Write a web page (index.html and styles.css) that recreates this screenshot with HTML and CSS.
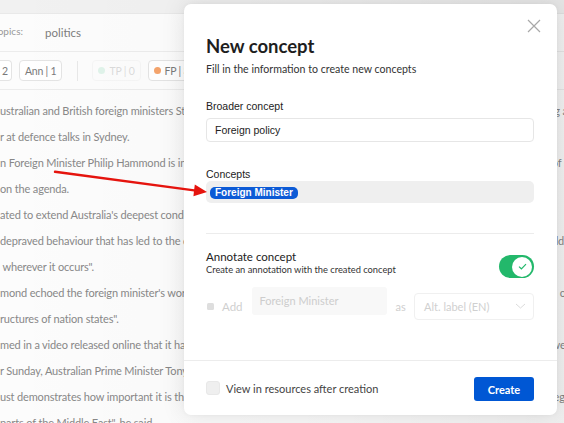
FILE: index.html
```html
<!DOCTYPE html>
<html lang="en">
<head>
<meta charset="utf-8">
<title>New concept</title>
<link rel="stylesheet" href="styles.css">
</head>
<body>
<div class="page">
  <div class="doc">
    <div class="doc-header"></div>
    <div class="topics"><span class="topics-label">Topics:</span><span class="topics-value">politics</span></div>
    <div class="chips">
      <span class="chip chip-cut">2</span>
      <span class="chip">Ann | 1</span>
      <span class="chip-divider"></span>
      <span class="chip chip-faded"><span class="dot dot-green"></span>TP | 0</span>
      <span class="chip"><span class="dot dot-orange"></span>FP | 3</span>
    </div>
    <div class="doc-text">
      <p>ustralian and British foreign ministers Stood side by side in Sydney on Sunday as they spoke out against the group during a joint</p>
      <p>r at defence talks in Sydney.</p>
      <p>n Foreign Minister Philip Hammond is in Australia for talks with Julie Bishop where security is at the very top of the list of issues to</p>
      <p>on the agenda.</p>
      <p>ated to extend Australia's deepest condolences to the families</p>
      <p>depraved behaviour that has led to the deaths of innocent people in Iraq and in Syria as well as in other parts of the world</p>
      <p>&nbsp;wherever it occurs".</p>
      <p>mond echoed the foreign minister's words, saying the group seeks to destroy the institutions of the governments and all of the ls</p>
      <p>ructures of nation states".</p>
      <p>med in a video released online that it had beheaded the aid worker, an act that was widely condemned by leaders who were</p>
      <p>r Sunday, Australian Prime Minister Tony Abbott said the murder was an outrage</p>
      <p>ust demonstrates how important it is that we stand together against the terror in those and the other countries of this region in</p>
      <p>parts of the Middle East", he said.</p>
    </div>
  </div>
  <div class="overlay"></div>
  <svg class="arrow" width="564" height="423" viewBox="0 0 564 423" aria-hidden="true">
    <line x1="55" y1="171.8" x2="196" y2="190.6" stroke="#e5140e" stroke-width="2.4" stroke-linecap="round"/>
    <polygon points="207,192 193.4,196.2 194.8,184.6" fill="#e5140e"/>
  </svg>
  <div class="modal">
    <button class="close" aria-label="Close">
      <svg width="14" height="14" viewBox="0 0 14 14"><path d="M1 1 L13 13 M13 1 L1 13" stroke="#a8a8a8" stroke-width="1.2" fill="none"/></svg>
    </button>
    <div class="modal-body">
      <h1 class="title">New concept</h1>
      <p class="subtitle">Fill in the information to create new concepts</p>

      <div class="field">
        <label class="field-label">Broader concept</label>
        <div class="input">Foreign policy</div>
      </div>

      <div class="field field-concepts">
        <label class="field-label">Concepts</label>
        <div class="concepts-box"><span class="tag">Foreign Minister</span></div>
      </div>

      <div class="separator"></div>

      <div class="annotate">
        <div class="annotate-text">
          <div class="annotate-title">Annotate concept</div>
          <div class="annotate-sub">Create an annotation with the created concept</div>
        </div>
        <div class="toggle"><span class="knob">
          <svg width="9" height="7" viewBox="0 0 9 7"><path d="M1 3.6 L3.4 5.8 L8 1.2" stroke="#23b86b" stroke-width="1.2" fill="none"/></svg>
        </span></div>
      </div>

      <div class="add-row">
        <span class="mini-check"></span>
        <span class="add-label">Add</span>
        <div class="add-input">Foreign Minister</div>
        <span class="as-label">as</span>
        <div class="select">
          <span>Alt. label (EN)</span>
          <svg width="11" height="6" viewBox="0 0 11 6"><path d="M1 1 L5.5 5 L10 1" stroke="#dcdcdc" stroke-width="1" fill="none"/></svg>
        </div>
      </div>
    </div>
    <div class="modal-footer">
      <label class="view-check"><span class="checkbox"></span><span class="view-label">View in resources after creation</span></label>
      <button class="create">Create</button>
    </div>
  </div>
</div>
</body>
</html>
```

FILE: styles.css
```css
* { box-sizing: border-box; }
html, body { margin: 0; padding: 0; }
body {
  width: 564px;
  height: 423px;
  overflow: hidden;
  background: #fcfcfc;
  font-family: "Lato", "Liberation Sans", sans-serif;
}
.page {
  position: relative;
  width: 564px;
  height: 423px;
  overflow: hidden;
}
.doc { width: 564px; }
.doc-header {
  height: 14px;
  background: #f1f1f1;
  border-bottom: 1px solid #e9e9e9;
}
.topics {
  height: 38px;
  display: flex;
  align-items: center;
  border-bottom: 1px solid #ececec;
  margin-left: -7px;
  color: #999;
}
.topics-label { font-size: 10px; margin-top: -4px; }
.topics-value { font-size: 11.5px; margin-left: 22px; color: #7d7d7d; }
.chips {
  height: 38px;
  display: flex;
  align-items: center;
  border-bottom: 1px solid #ececec;
  gap: 7px;
}
.chip {
  height: 21px;
  display: inline-flex;
  align-items: center;
  gap: 4px;
  padding: 0 5px;
  border: 1px solid #e4e4e4;
  border-radius: 4px;
  background: #fff;
  font-size: 10.5px;
  letter-spacing: -0.2px;
  color: #7a7a7a;
}
.chip-cut { border-left: none; border-radius: 0 4px 4px 0; padding: 0 3px 0 2px; }
.chip-divider { width: 1px; height: 20px; background: #e8e8e8; margin: 0 7px 0 8px; }
.chip-faded { opacity: 0.25; }
.dot { width: 7px; height: 7px; border-radius: 50%; display: inline-block; }
.dot-green { background: #8fdcb6; }
.dot-orange { background: #f5a46c; }
.doc-text { padding-top: 8px; }
.doc-text p {
  margin: 0;
  height: 26px;
  line-height: 26px;
  white-space: nowrap;
  font-size: 11px;
  letter-spacing: -0.15px;
  color: #888;
}
.overlay {
  position: absolute;
  inset: 0;
  background: linear-gradient(90deg, rgba(0,0,0,0.0) 0%, rgba(0,0,0,0.02) 60%, rgba(0,0,0,0.05) 100%);
}
.arrow { position: absolute; left: 0; top: 0; z-index: 3; }
.modal {
  position: absolute;
  left: 184px;
  top: 4px;
  width: 373px;
  height: 411px;
  background: #fff;
  border-radius: 7px;
  box-shadow: 0 0 24px rgba(0,0,0,0.10), 0 0 4px rgba(0,0,0,0.04);
  display: flex;
  flex-direction: column;
  z-index: 2;
}
.close {
  position: absolute;
  right: 16px;
  top: 15px;
  width: 14px;
  height: 14px;
  padding: 0;
  border: none;
  background: none;
  display: block;
}
.close svg { display: block; }
.modal-body {
  flex: 1;
  padding: 31px 23px 0 22px;
}
.title {
  margin: 0;
  font-size: 18.5px;
  line-height: 22px;
  font-weight: 700;
  color: #1e1e1e;
}
.subtitle {
  margin: 5px 0 0;
  font-size: 10.6px;
  line-height: 14px;
  color: #333;
}
.field { margin-top: 24px; }
.field-concepts { margin-top: 26px; }
.field-label {
  display: block;
  font-family: "Liberation Sans", Arial, sans-serif;
  font-size: 10.5px;
  line-height: 13px;
  color: #222;
}
.input {
  margin-top: 5px;
  height: 24px;
  border: 1px solid #e6e6e6;
  border-radius: 4px;
  padding: 0 8px;
  display: flex;
  align-items: center;
  font-family: "Liberation Sans", Arial, sans-serif;
  font-size: 10.5px;
  color: #222;
}
.concepts-box {
  height: 22px;
  background: #efefef;
  border-radius: 5px;
  padding: 0 4px;
  display: flex;
  align-items: center;
}
.tag {
  background: #0d5bd6;
  color: #fff;
  font-family: "Liberation Sans", Arial, sans-serif;
  font-weight: 700;
  font-size: 10px;
  line-height: 12px;
  padding: 0 5px;
  border-radius: 5px;
  margin-top: 1px;
}
.separator {
  margin-top: 30px;
  height: 1px;
  background: #ececec;
}
.annotate {
  margin-top: 16px;
  display: flex;
  align-items: flex-start;
  justify-content: space-between;
}
.annotate-title { font-size: 11.5px; line-height: 14px; color: #222; }
.annotate-sub { font-size: 9.3px; line-height: 11px; color: #333; margin-top: 0; }
.toggle {
  margin-top: 5px;
  width: 35px;
  height: 23px;
  border-radius: 12px;
  background: #23b86b;
  display: flex;
  align-items: center;
  justify-content: flex-end;
  padding-right: 2px;
}
.knob {
  width: 20px;
  height: 20px;
  border-radius: 50%;
  background: #fff;
  display: flex;
  align-items: center;
  justify-content: center;
}
.knob svg { display: block; }
.add-row {
  margin-top: 11px;
  display: flex;
  align-items: center;
  height: 34px;
}
.mini-check {
  width: 7px;
  height: 7px;
  border-radius: 1.5px;
  background: #dedede;
  margin-left: 1px;
}
.add-label { margin-left: 8px; font-size: 11.5px; color: #cfcfcf; }
.add-input {
  margin-left: 9px;
  width: 135px;
  height: 28px;
  margin-bottom: 11px;
  background: #f8f8f8;
  border-radius: 3px;
  padding: 0 8px;
  display: flex;
  align-items: center;
  font-size: 11px;
  color: #cdcdcd;
}
.as-label { margin-left: 9px; font-size: 11px; color: #cfcfcf; }
.select {
  margin-left: auto;
  width: 120px;
  height: 27px;
  border: 1px solid #f0f0f0;
  border-radius: 4px;
  padding: 0 7px 0 9px;
  display: flex;
  align-items: center;
  justify-content: space-between;
  font-size: 11px;
  color: #d0d0d0;
}
.modal-footer {
  height: 55px;
  border-top: 1px solid #ececec;
  padding: 0 23px 0 22px;
  display: flex;
  align-items: center;
  justify-content: space-between;
}
.view-check { display: flex; align-items: center; }
.checkbox {
  width: 14px;
  height: 14px;
  border-radius: 3px;
  background: #efefef;
  border: 1px solid #e8e8e8;
}
.view-label { margin-left: 6px; font-size: 11px; color: #444; }
.create {
  width: 60px;
  height: 24px;
  border: none;
  border-radius: 3px;
  background: #0057d4;
  color: #fff;
  font-family: "Lato", "Liberation Sans", sans-serif;
  font-weight: 700;
  font-size: 11px;
  margin-top: 2px;
}
```
